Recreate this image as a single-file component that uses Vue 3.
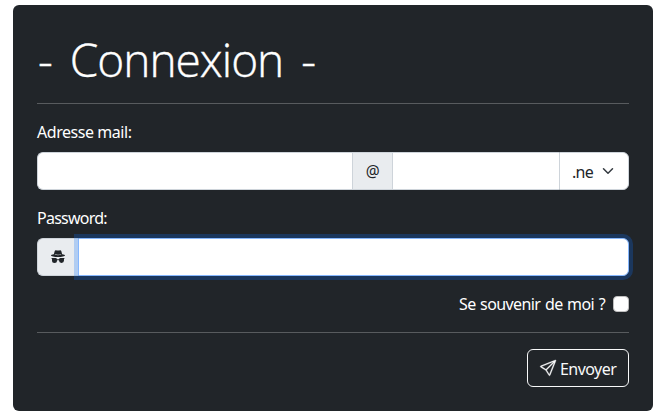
<script setup>
import { ref } from 'vue'

const mailUser = ref('')
const mailHost = ref('')
const password = ref('')
const remember = ref(false)
</script>

<template>
  <form class="card" @submit.prevent>
    <h1 class="title">- Connexion -</h1>
    <hr class="rule" />

    <label class="label mail-label" for="mail">Adresse mail:</label>
    <div class="group">
      <input id="mail" v-model="mailUser" class="control mail-user" type="text" />
      <span class="addon at">@</span>
      <input v-model="mailHost" class="control mail-host" type="text" />
      <div class="select" role="listbox">
        <span class="select-text">.ne</span>
        <svg class="chevron" viewBox="0 0 16 16" width="12" height="12">
          <path fill="none" stroke="#343a40" stroke-linecap="round" stroke-linejoin="round" stroke-width="2" d="m2 5 6 6 6-6" />
        </svg>
      </div>
    </div>

    <label class="label password-label" for="password">Password:</label>
    <div class="group">
      <span class="addon secret">
        <svg viewBox="0 0 16 16" width="16" height="16" fill="currentColor">
          <path d="m4.736 1.968-.892 3.269-.014.058C2.113 5.568 1 6.006 1 6.5 1 7.328 4.134 8 8 8s7-.672 7-1.5c0-.494-1.113-.932-2.83-1.205l-.014-.058-.892-3.27c-.146-.533-.698-.849-1.239-.734C9.411 1.363 8.62 1.5 8 1.5s-1.411-.136-2.025-.267c-.541-.115-1.093.2-1.239.735m.015 3.867a.25.25 0 0 1 .274-.224c.9.092 1.91.143 2.975.143a30 30 0 0 0 2.975-.143.25.25 0 0 1 .05.498c-.918.093-1.944.145-3.025.145s-2.107-.052-3.025-.145a.25.25 0 0 1-.224-.274" />
          <path d="M2 10.5q.001-.264.085-.5H2a.5.5 0 0 1 0-1h3.5a1.5 1.5 0 0 1 1.488 1.312 3.5 3.5 0 0 1 2.024 0A1.5 1.5 0 0 1 10.5 9H14a.5.5 0 0 1 0 1h-.085q.084.236.085.5v1a2.5 2.5 0 0 1-5 0v-.14l-.21-.07a2.5 2.5 0 0 0-1.58 0l-.21.07v.14a2.5 2.5 0 0 1-5 0z" />
        </svg>
      </span>
      <input id="password" v-model="password" class="control focused" type="password" />
    </div>

    <label class="remember">
      <span class="remember-text">Se souvenir de moi ?</span>
      <input v-model="remember" class="check" type="checkbox" />
    </label>
    <hr class="rule" />

    <div class="actions">
      <button class="submit" type="submit">
        <svg class="send" viewBox="0 0 16 16" width="16" height="16" fill="currentColor">
          <path d="M15.854.146a.5.5 0 0 1 .11.54l-5.819 14.547a.75.75 0 0 1-1.329.124l-3.178-4.995L.643 7.184a.75.75 0 0 1 .124-1.33L15.314.037a.5.5 0 0 1 .54.11ZM6.636 10.07l2.761 4.338L14.13 2.576zm6.787-8.201L1.591 6.602l4.339 2.76z" />
        </svg>
        <span class="submit-text">Envoyer</span>
      </button>
    </div>
  </form>
</template>

<style>
body {
  background: #fff;
}
</style>

<style scoped>
* {
  box-sizing: border-box;
}
.card {
  width: 640px;
  height: 406px;
  margin: 5px 0 0 13px;
  padding: 24px;
  border-radius: 6px;
  background: #212529;
  color: #fff;
  font: 400 16px/24px "Noto Sans", "Open Sans", sans-serif;
  letter-spacing: -0.45px;
}
.title {
  height: 58px;
  margin: 0;
  padding-left: 1px;
  font: 300 46px/61px "Open Sans", "Noto Sans", sans-serif;
  letter-spacing: -1px;
  word-spacing: 7px;
  white-space: nowrap;
  -webkit-text-stroke: 0.4px #fff;
}
.rule {
  height: 1px;
  margin: 16px 0;
  border: 0;
  background: #585b5e;
}
.label {
  display: block;
  height: 24px;
  margin-bottom: 8px;
}
.password-label {
  letter-spacing: -0.75px;
}
.group {
  display: flex;
  height: 38px;
  margin-bottom: 16px;
}
.control {
  min-width: 0;
  height: 38px;
  padding: 6px 12px;
  border: 1px solid #ced4da;
  background: #fff;
  color: #212529;
  font: inherit;
  outline: none;
}
.mail-user {
  width: 315px;
  border-right: 0;
  border-radius: 6px 0 0 6px;
}
.mail-host {
  width: 167px;
  border-right: 0;
}
.addon {
  display: flex;
  align-items: center;
  justify-content: center;
  border: 1px solid #ced4da;
  background: #e9ecef;
  color: #212529;
}
.at {
  width: 40px;
  border-right: 0;
  font-size: 15.5px;
}
.secret {
  width: 41px;
  border-right: 0;
  border-radius: 6px 0 0 6px;
}
.focused {
  flex: 1;
  border-color: #86b7fe;
  border-radius: 0 6px 6px 0;
  box-shadow: 0 0 0 4px rgba(13, 110, 253, 0.25);
}
.select {
  display: flex;
  flex: 1;
  align-items: center;
  justify-content: space-between;
  padding: 0 14px 0 12px;
  border: 1px solid #ced4da;
  border-radius: 0 6px 6px 0;
  background: #fff;
  color: #212529;
}
.select-text {
  padding-top: 1px;
  letter-spacing: -0.7px;
}
.remember {
  display: flex;
  align-items: center;
  justify-content: flex-end;
  gap: 8px;
  height: 24px;
}
.remember-text {
  letter-spacing: -0.6px;
  word-spacing: 1px;
}
.check {
  width: 16px;
  height: 16px;
  margin: 0;
  border: 1px solid #bfbfbf;
  border-radius: 4px;
  background: #fff;
  appearance: none;
}
.actions {
  display: flex;
  justify-content: flex-end;
}
.submit {
  display: flex;
  align-items: center;
  gap: 4px;
  width: 102px;
  height: 38px;
  padding: 0 12px;
  border: 1px solid #f8f9fa;
  border-radius: 6px;
  background: transparent;
  color: #f8f9fa;
  font: inherit;
  letter-spacing: -0.55px;
}
.send {
  flex: none;
  overflow: visible;
  stroke: currentColor;
  stroke-width: 0.35;
}
.submit-text {
  padding-top: 1px;
}
</style>
